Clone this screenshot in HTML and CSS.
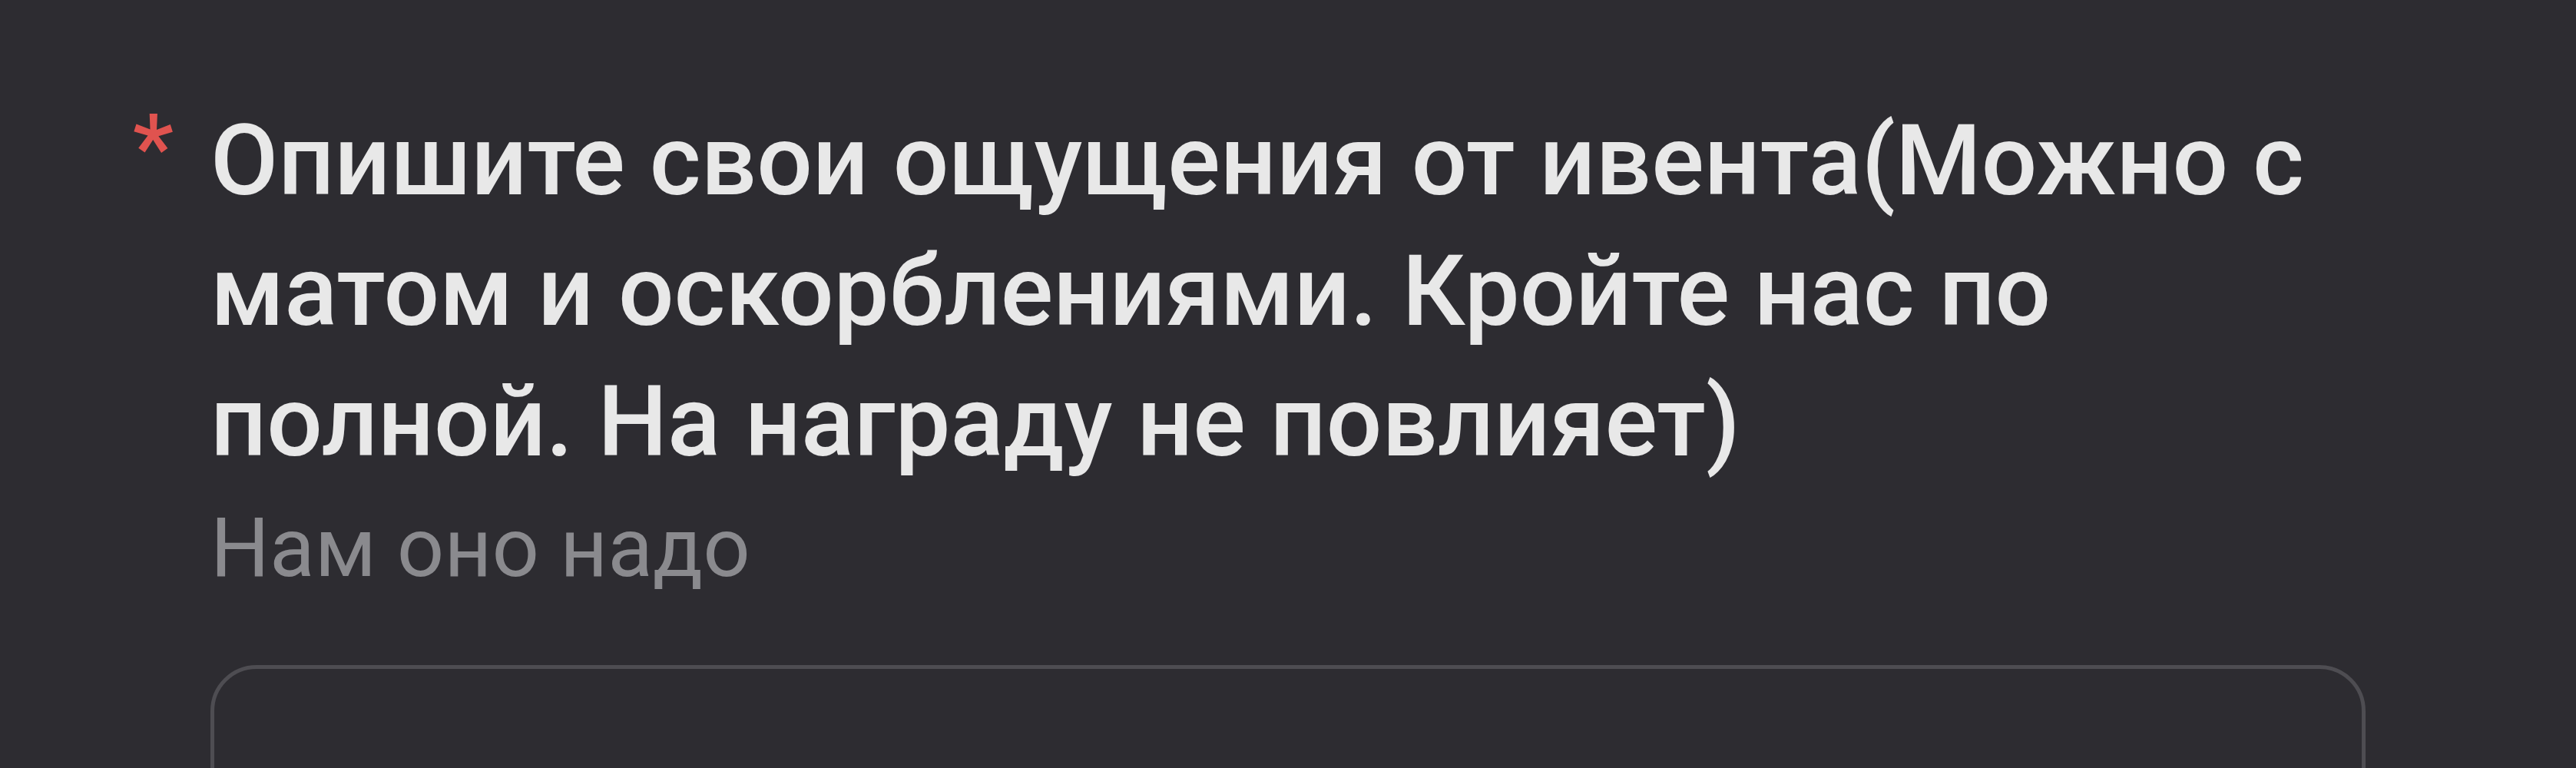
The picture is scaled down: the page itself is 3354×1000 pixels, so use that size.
FILE: index.html
```html
<!DOCTYPE html>
<html lang="ru">
<head>
  <meta charset="UTF-8" />
  <meta name="viewport" content="width=device-width, initial-scale=1.0" />
  <title>Анкета</title>
  <link rel="stylesheet" href="styles.css">
</head>
<body>

  <form class="form">
    <div class="question">
      <span class="required">*</span>
      <label class="question-title" for="feelings">Опишите свои ощущения от ивента(Можно с матом и оскорблениями. Кройте нас по полной. На награду не повлияет)</label>
      <p class="question-hint">Нам оно надо</p>
      <textarea id="feelings" class="answer" required></textarea>
    </div>
  </form>

</body>
</html>
```

FILE: styles.css
```css
body {
  margin: 0;
  background: #2d2c31;
  font-family: 'Roboto', 'Noto Sans', sans-serif;
  color: #e6e6e6;
  overflow: hidden;
}

.form {
  padding: 124px 274px 0 160px;
}

.question {
  display: grid;
  grid-template-columns: 114px 1fr;
}

.required {
  grid-column: 1;
  grid-row: 1;
  margin-top: -16px;
  padding-right: 48px;
  text-align: right;
  color: #e0534f;
  font-size: 120px;
  line-height: 170px;
  font-weight: 500;
}

.question-title {
  grid-column: 2;
  grid-row: 1;
  font-size: 128px;
  line-height: 170px;
  font-weight: 500;
  color: #e8e8e8;
}

.question-hint {
  grid-column: 2;
  grid-row: 2;
  margin: 4px 0 0;
  font-size: 108px;
  line-height: 150px;
  color: #8a8a8e;
}

.answer {
  grid-column: 2;
  grid-row: 3;
  display: block;
  box-sizing: border-box;
  width: 100%;
  height: 400px;
  margin-top: 78px;
  background: transparent;
  border: 5px solid #4e4d52;
  border-radius: 60px;
  resize: none;
  outline: none;
}
```
